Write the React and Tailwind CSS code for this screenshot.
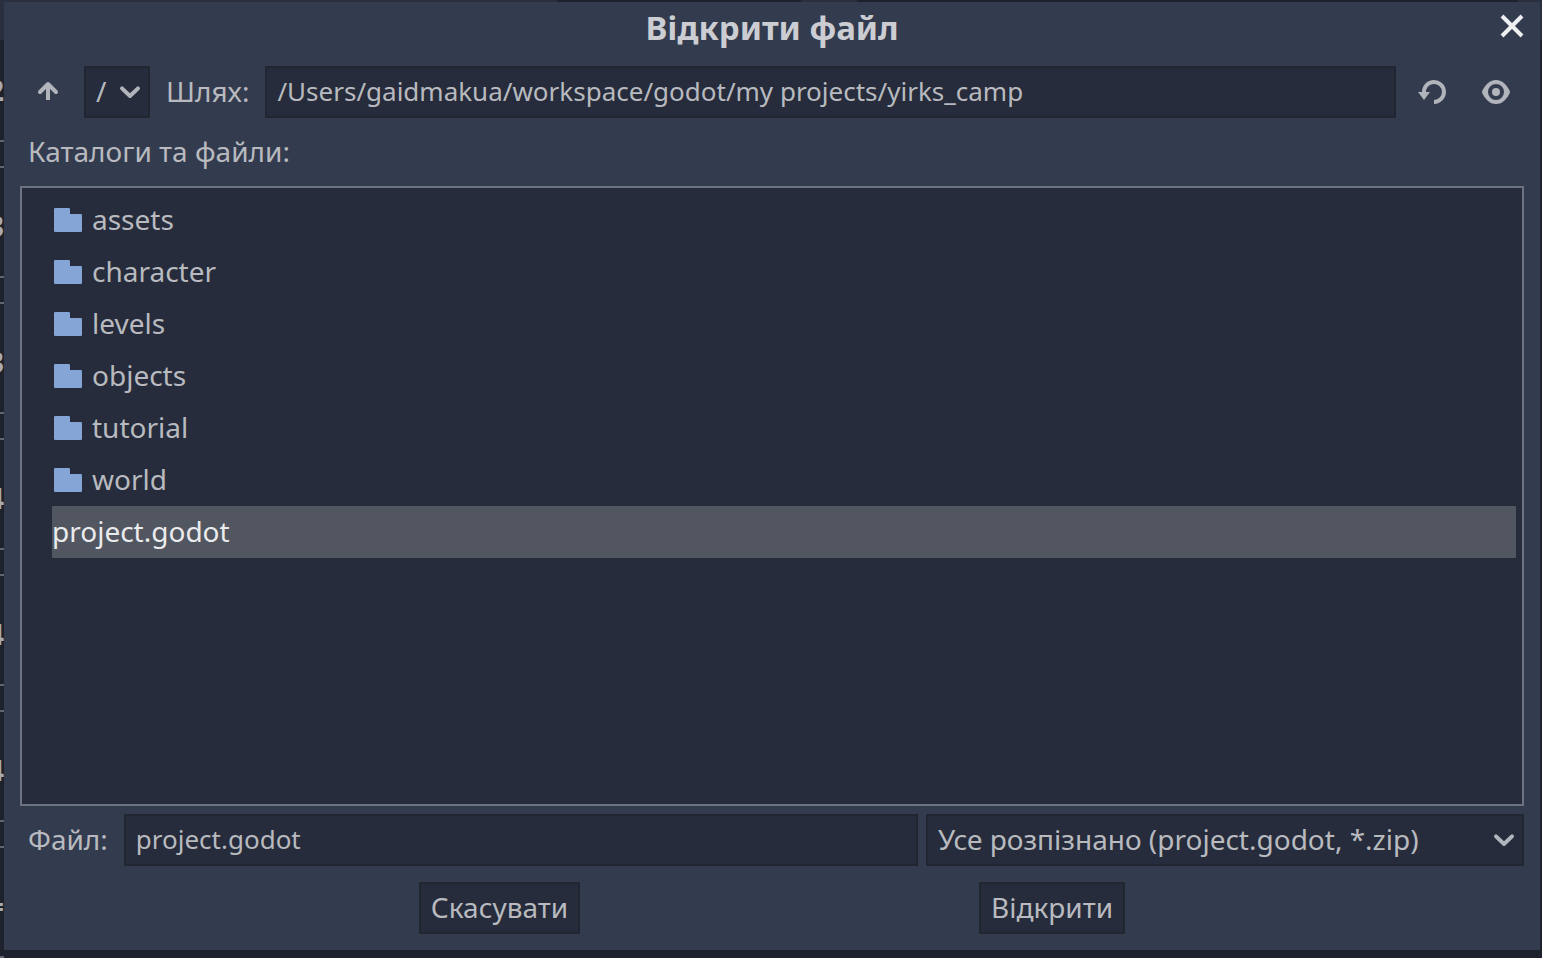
import React, { useState } from "react";

const folders = ["assets", "character", "levels", "objects", "tutorial", "world"];
const rows = ["2", "3", "3", "4", "4", "4", "="];

function Chevron() {
  return (
    <svg className="h-8 w-8 shrink-0" viewBox="0 0 16 16" fill="none" stroke="#b1b4ba" strokeWidth="2" strokeLinecap="round" strokeLinejoin="round" aria-hidden="true">
      <path d="M4 6.2 8 10l4-3.8" />
    </svg>
  );
}

function Folder() {
  return (
    <svg className="h-8 w-8 shrink-0" viewBox="0 0 16 16" fill="#84a5d6" aria-hidden="true">
      <path d="M1.6 2a.6.6 0 0 0-.6.6v10.8a.6.6 0 0 0 .6.6h12.8a.6.6 0 0 0 .6-.6V5.6a.6.6 0 0 0-.6-.6H9V2.6a.6.6 0 0 0-.6-.6Z" />
    </svg>
  );
}

/* The project list behind the dialog, of which only the edges stay visible. */
function Backdrop() {
  return (
    <div aria-hidden="true" className="absolute inset-0 flex flex-col">
      <div className="flex h-10 shrink-0">
        <div className="w-[557px] bg-[#2a2f3f]" />
        <div className="w-[244px]" />
        <div className="w-14 bg-[#2a2f3f]" />
        <div className="grow" />
        <div className="w-6 bg-[#2a2f3f]" />
      </div>
      <div className="flex min-h-0 grow flex-col overflow-hidden pt-8">
        {rows.map((n, i) => (
          <div key={i} className="flex h-[136px] w-1 shrink-0 flex-col items-end">
            <span className="font-bold text-[#a9abb1]">{n}</span>
            <span className="mt-8 h-7 w-8 border-y-2 border-[#63666e]" />
          </div>
        ))}
      </div>
    </div>
  );
}

export default function App() {
  const [path, setPath] = useState("/Users/gaidmakua/workspace/godot/my projects/yirks_camp");
  const [file, setFile] = useState("project.godot");
  const box = "h-[52px] border-2 border-[#222631] bg-[#262c3b] text-[#b8babf] outline-none";
  const field = `${box} min-w-0 grow px-2.5 pb-0.5 text-[26px]`;
  return (
    <div className="relative h-screen overflow-hidden bg-[#1e222d] font-['Noto_Sans','Liberation_Sans',sans-serif] text-[28px] leading-9 text-[#b8babf]">
      <Backdrop />
      <div className="relative flex h-full flex-col pt-0.5 pr-0.5 pb-2 pl-1">
        <main className="flex min-h-0 grow flex-col bg-[#333b4f] px-4">
          <header className="flex h-16 shrink-0 items-start">
            <div className="w-7" />
            <h1 className="grow pt-2 text-center text-[33px] font-bold text-[#cccdd2]">Відкрити файл</h1>
            <button aria-label="Закрити" className="mt-2 -mr-1 h-8 w-8">
              <svg className="h-8 w-8" viewBox="0 0 32 32" fill="none" stroke="#eeeff1" strokeWidth="4" aria-hidden="true">
                <path d="m6 6 20 20M26 6 6 26" />
              </svg>
            </button>
          </header>

          <div className="flex shrink-0 items-center">
            <button aria-label="Вгору" className="mr-5 ml-3 h-8 w-8">
              <svg className="h-8 w-8" viewBox="0 0 16 16" fill="none" stroke="#b1b4ba" strokeWidth="2" aria-hidden="true">
                <path d="M8 12V4" />
                <path d="M4 8l4-4 4 4" strokeLinecap="round" strokeLinejoin="round" />
              </svg>
            </button>
            <button aria-label="Диск" className={`${box} flex w-[66px] items-center justify-between pr-0.5 pl-2.5`}>
              <span className="pb-0.5">/</span>
              <Chevron />
            </button>
            <label htmlFor="path" className="mx-4 pb-0.5">Шлях:</label>
            <input id="path" value={path} onChange={(e) => setPath(e.target.value)} className={field} />
            <button aria-label="Оновити" className="ml-5 h-8 w-8">
              <svg className="h-8 w-8" viewBox="0 0 16 16" fill="none" aria-hidden="true">
                <path d="M4 8.5a5 5 0 1 1 5 4.5" stroke="#b1b4ba" strokeWidth="2" />
                <path d="M1 8h6l-3 4Z" fill="#b1b4ba" />
              </svg>
            </button>
            <button aria-label="Приховані файли" className="mr-3 ml-8 h-8 w-8">
              <svg className="h-8 w-8" viewBox="0 0 16 16" fill="#b1b4ba" aria-hidden="true">
                <circle cx="8" cy="8" r="5" fill="none" stroke="#b1b4ba" strokeWidth="2" />
                <path d="M3.4 4.2Q2 5.5 1.2 7.2q-.4.8 0 1.6Q2 10.5 3.4 11.8L4 8ZM12.6 4.2Q14 5.5 14.8 7.2q.4.8 0 1.600-.8 1.700-2.200 3L12 8Z" />
                <circle cx="8" cy="8" r="2" />
              </svg>
            </button>
          </div>

          <h2 className="flex h-[68px] shrink-0 items-center px-2 pb-0.5">Каталоги та файли:</h2>

          <ul className="min-h-0 grow border-2 border-[#6e7381] bg-[#262c3b] py-1.5 pr-1.5 pl-[30px]">
            {folders.map((name) => (
              <li key={name}>
                <button className="flex h-[52px] w-full items-center gap-2 text-left">
                  <Folder />
                  <span className="pb-0.5">{name}</span>
                </button>
              </li>
            ))}
            <li>
              <button className="h-[52px] w-full bg-[#525661] pb-0.5 text-left text-[#eaebed]">project.godot</button>
            </li>
          </ul>

          <div className="mt-2 flex shrink-0 items-center">
            <label htmlFor="file" className="mr-4 ml-2 pb-0.5">Файл:</label>
            <input id="file" value={file} onChange={(e) => setFile(e.target.value)} className={field} />
            <div className="ml-2 grid w-[598px] shrink-0 items-center">
              <select aria-label="Тип файлу" className={`${box} col-start-1 row-start-1 w-full appearance-none px-2.5 pb-0.5`}>
                <option>Усе розпізнано (project.godot, *.zip)</option>
              </select>
              <div className="pointer-events-none col-start-1 row-start-1 mr-1 justify-self-end">
                <Chevron />
              </div>
            </div>
          </div>

          <footer className="my-4 flex shrink-0 justify-evenly">
            <button className={`${box} px-2.5 pb-0.5`}>Скасувати</button>
            <button className={`${box} px-2.5 pb-0.5`}>Відкрити</button>
          </footer>
        </main>
      </div>
    </div>
  );
}
